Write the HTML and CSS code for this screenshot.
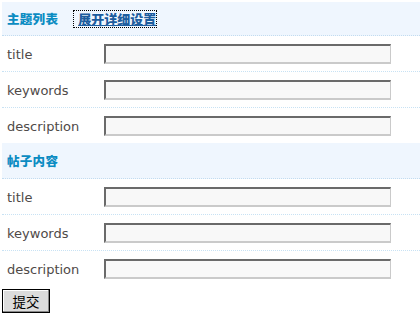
FILE: index.html
```html
<!DOCTYPE html>
<html>
<head>
<meta charset="utf-8">
<link rel="stylesheet" href="styles.css">
</head>
<body>
<form class="page">
  <div class="section">
    <div class="head">
      <span class="head-title">主题列表</span>
      <a class="toggle" href="#">展开详细设置</a>
    </div>
    <div class="row"><label class="label">title</label><input class="field" type="text"></div>
    <div class="row"><label class="label">keywords</label><input class="field" type="text"></div>
    <div class="row last"><label class="label">description</label><input class="field" type="text"></div>
  </div>
  <div class="section">
    <div class="head head2">
      <span class="head-title">帖子内容</span>
    </div>
    <div class="row"><label class="label">title</label><input class="field" type="text"></div>
    <div class="row"><label class="label">keywords</label><input class="field" type="text"></div>
    <div class="row last"><label class="label">description</label><input class="field" type="text"></div>
  </div>
  <div class="actions"><button class="submit" type="button">提交</button></div>
</form>
</body>
</html>
```
FILE: styles.css
```css
html, body {
  margin: 0;
  padding: 0;
  background: #ffffff;
}
.page {
  margin: 0;
  padding: 2px 0 0 2px;
  font-family: "DejaVu Sans", Verdana, "Noto Sans CJK SC", sans-serif;
}
.head {
  display: flex;
  align-items: center;
  height: 33px;
  background: #eff6fe;
  border-bottom: 1px dotted #c2dcf0;
  padding-left: 5px;
}
.head2 {
  height: 35px;
}
.head-title {
  font-family: "Noto Sans CJK SC", sans-serif;
  font-weight: 900;
  font-size: 12.5px;
  color: #0b8cc2;
  letter-spacing: 0.3px;
}
.toggle {
  margin-left: 16px;
  padding: 0 0 0 4px;
  height: 16px;
  line-height: 16px;
  font-family: "Noto Sans CJK SC", serif;
  font-weight: 900;
  font-size: 13px;
  color: #1d5d9e;
  text-decoration: underline;
  outline: 1px dotted #000;
}
.row {
  display: flex;
  align-items: center;
  height: 35px;
  border-bottom: 1px dotted #c8e2f4;
}
.row.last {
  border-bottom: none;
}
.label {
  width: 97px;
  padding-left: 5px;
  padding-top: 1px;
  font-size: 13px;
  color: #4f4a48;
}
.field {
  box-sizing: border-box;
  width: 287px;
  height: 20px;
  margin: 0;
  padding: 0 3px;
  background: #f8f8f8;
  border-style: solid;
  border-width: 2px 1px 2px 2px;
  border-color: #6a6a6a #cacaca #cacaca #6a6a6a;
  font-size: 12px;
}
.actions {
  padding-top: 3px;
}
.submit {
  box-sizing: border-box;
  width: 48px;
  height: 24px;
  margin: 0;
  padding: 0;
  background: #dcdcdc;
  border: 1px solid #000;
  box-shadow: inset -1px -1px 0 #888, inset 1px 1px 0 #fff;
  font-family: "Noto Sans CJK SC", sans-serif;
  font-size: 13.5px;
  color: #000;
}
```
